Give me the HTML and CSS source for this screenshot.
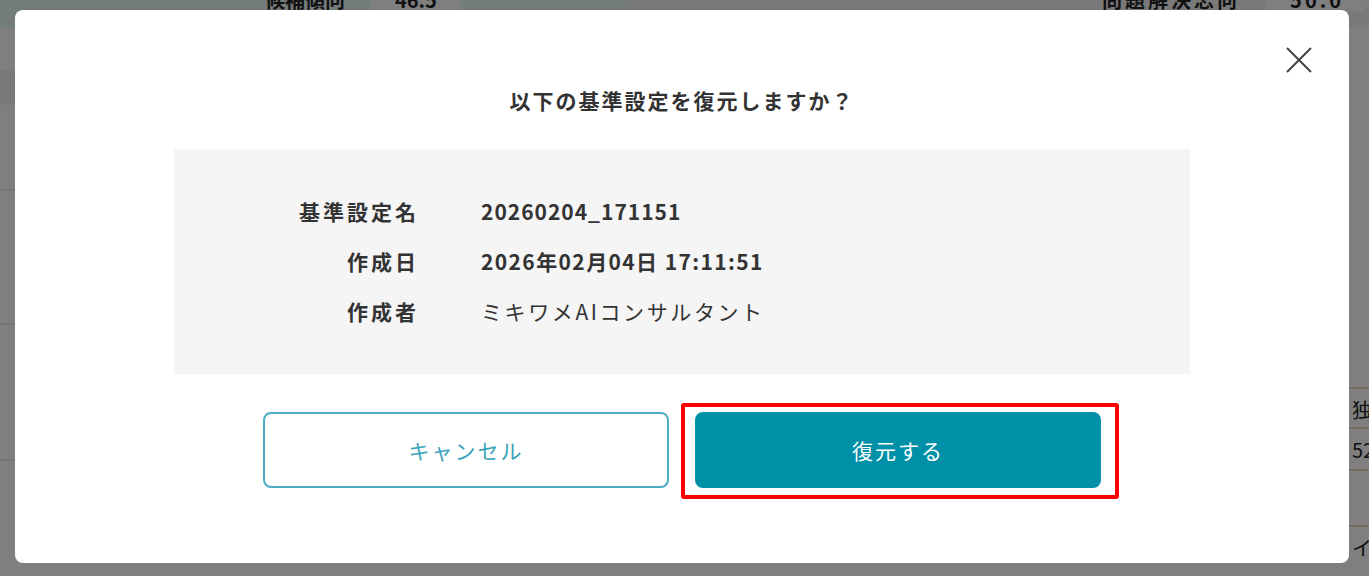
FILE: index.html
```html
<!DOCTYPE html>
<html lang="ja">
<head>
  <meta charset="UTF-8" />
  <meta name="viewport" content="width=device-width, initial-scale=1.0"/>
  <title>基準設定の復元</title>
  <link rel="stylesheet" href="styles.css">
</head>
<body>
  <div class="page">
    <div class="summary">
      <div class="stat stat-left">
        <span class="stat-name">候補傾向</span>
        <span class="stat-value">46.5</span>
      </div>
      <div class="stat stat-right">
        <span class="stat-name">問題解決志向</span>
        <span class="stat-value">50.0</span>
      </div>
    </div>
    <div class="layout">
      <div class="main">
        <div class="band"></div>
        <div class="line-row r1"></div>
        <div class="line-row r2"></div>
        <div class="line-row r3"></div>
      </div>
      <div class="aside">
        <div class="aside-cell head">独自性</div>
        <div class="aside-cell">52.1</div>
        <div class="aside-cell empty"></div>
        <div class="aside-cell foot">イス</div>
      </div>
    </div>
  </div>

  <div class="overlay">
    <div class="modal">
      <button class="modal-close" type="button" aria-label="閉じる">
        <svg width="26" height="26" viewBox="0 0 26 26">
          <path d="M1 1 L25 25 M25 1 L1 25" stroke="#444" stroke-width="2" fill="none"/>
        </svg>
      </button>

      <h2 class="modal-title">以下の基準設定を復元しますか？</h2>

      <dl class="detail">
        <dt>基準設定名</dt>
        <dd class="strong">20260204_171151</dd>
        <dt>作成日</dt>
        <dd class="strong date">2026年02月04日 17:11:51</dd>
        <dt>作成者</dt>
        <dd class="kana">ミキワメAIコンサルタント</dd>
      </dl>

      <div class="actions">
        <button type="button" class="btn btn-cancel">キャンセル</button>
        <div class="highlight">
          <button type="button" class="btn btn-primary">復元する</button>
        </div>
      </div>
    </div>
  </div>
</body>
</html>
```

FILE: styles.css
```css
* {
  box-sizing: border-box;
}
body {
  font-family: "Noto Sans CJK JP", "Noto Sans", sans-serif;
  background: #fff;
  color: #333;
  margin: 0;
  height: 576px;
  overflow: hidden;
}

/* page behind the dialog */
.page {
  margin-top: -20px;
}
.summary {
  display: grid;
  grid-template-columns: 1fr 1fr;
  height: 47px;
}
.stat {
  display: flex;
  align-items: flex-start;
  gap: 25px;
  padding-top: 8px;
  font-size: 20px;
  font-weight: bold;
  line-height: 24px;
  color: #222;
  white-space: nowrap;
}
.stat-left {
  background: #e6f6f6;
  padding-left: 265px;
}
.stat-right {
  background: #f2f2f2;
  padding-left: 471px;
  letter-spacing: 3px;
}
.stat-value {
  background: #fff;
  border-radius: 14px;
  padding: 0 25px;
}
.layout {
  display: grid;
  grid-template-columns: 1349px 220px;
}
.main {
  display: flex;
  flex-direction: column;
}
.band {
  height: 78px;
  border-top: 43px solid #fff;
  background: #f4f4f4;
}
.line-row {
  border-bottom: 2px solid #ebebeb;
}
.r1 {
  height: 86px;
}
.r2 {
  height: 134px;
}
.r3 {
  height: 136px;
}
.aside {
  display: flex;
  flex-direction: column;
  padding-top: 360px;
  font-size: 20px;
  color: #222;
  white-space: nowrap;
}
.aside-cell {
  height: 42px;
  line-height: 42px;
  padding-left: 3px;
  border-bottom: 2px solid #e8d8c4;
  background: #fff;
}
.aside-cell.head {
  border-top: 2px solid #e8d8c4;
}
.aside-cell.empty {
  height: 56px;
}
.aside-cell.foot {
  border-bottom: none;
}

/* dialog */
.overlay {
  position: fixed;
  top: 0;
  left: 0;
  right: 0;
  bottom: 0;
  background: rgba(0, 0, 0, 0.5);
  padding: 10px 20px 13px 15px;
}
.modal {
  position: relative;
  height: 100%;
  background: #fff;
  border-radius: 8px;
  display: flex;
  flex-direction: column;
  align-items: center;
  padding-top: 75px;
}
.modal-close {
  position: absolute;
  top: 37px;
  right: 37px;
  width: 26px;
  height: 26px;
  padding: 0;
  border: none;
  background: none;
  cursor: pointer;
}
.modal-close svg {
  display: block;
}
.modal-title {
  margin: 0;
  font-size: 21px;
  font-weight: bold;
  line-height: 30px;
  letter-spacing: 2px;
  color: #333;
}
.detail {
  width: 1016px;
  margin: 34px 0 0;
  padding: 37px 0 38px;
  background: #f5f5f5;
  display: grid;
  grid-template-columns: 245px 1fr;
  column-gap: 62px;
  font-size: 21px;
  line-height: 50px;
  letter-spacing: 1px;
}
.detail dt {
  text-align: right;
  font-weight: bold;
  letter-spacing: 3px;
}
.detail dd {
  margin: 0;
}
.detail .strong {
  font-weight: bold;
}
.detail .date {
  letter-spacing: 1.4px;
}
.detail .kana {
  letter-spacing: 2.6px;
}
.actions {
  display: flex;
  gap: 26px;
  margin-top: 38px;
}
.btn {
  width: 406px;
  height: 76px;
  border-radius: 8px;
  font-family: inherit;
  font-size: 21px;
  letter-spacing: 2px;
  cursor: pointer;
}
.btn-cancel {
  background: #fff;
  border: 2px solid #4aafc5;
  color: #38a3bc;
}
.btn-primary {
  display: block;
  background: #0090a8;
  border: none;
  color: #fff;
}
.highlight {
  position: relative;
}
.highlight::after {
  content: "";
  position: absolute;
  top: -9px;
  left: -14px;
  right: -18px;
  bottom: -11px;
  border: 4px solid #f00;
  border-radius: 3px;
  pointer-events: none;
}
```
